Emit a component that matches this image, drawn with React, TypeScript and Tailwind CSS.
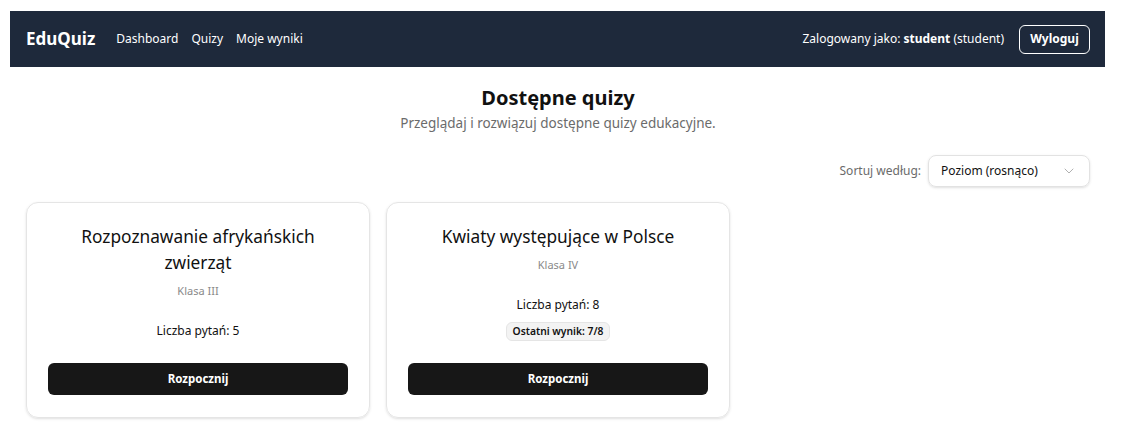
import { ChevronDown } from 'lucide-react'

const quizzes = [
  { title: 'Rozpoznawanie afrykańskich zwierząt', level: 'Klasa III', questions: 5, lastResult: null },
  { title: 'Kwiaty występujące w Polsce', level: 'Klasa IV', questions: 8, lastResult: '7/8' },
]

export default function App() {
  return (
    <div className="min-h-screen bg-white pt-[11px] pl-[10px] text-[#111]" style={{ fontFamily: '"Noto Sans", sans-serif' }}>
      <div className="w-[1095px]">
        {/* Navbar */}
        <header className="h-[56px] bg-[#1e293b] flex items-center pl-4 pr-[15px] text-white">
          <span className="text-[17px] font-bold mr-[21px]">EduQuiz</span>
          <nav className="flex items-center gap-[13px] text-[12px]">
            <span>Dashboard</span>
            <span>Quizy</span>
            <span>Moje wyniki</span>
          </nav>
          <div className="flex-1" />
          <div className="flex items-center gap-[15px] text-[12px]">
            <span>
              Zalogowany jako: <b className="font-bold">student</b> (student)
            </span>
            <button className="h-[29px] w-[71px] border border-white rounded-[6px] font-bold">Wyloguj</button>
          </div>
        </header>

        {/* Page content */}
        <main className="pl-4 pr-[15px]">
          <div className="text-center mt-[16px]">
            <h1 className="text-[20px] font-bold leading-[30px]">Dostępne quizy</h1>
            <p className="text-[13.5px] text-[#6b6b6b] leading-[20px]">
              Przeglądaj i rozwiązuj dostępne quizy edukacyjne.
            </p>
          </div>

          <div className="flex justify-end items-center gap-[7px] mt-[22px]">
            <span className="text-[12px] text-[#6b6b6b]">Sortuj według:</span>
            <div className="w-[162px] h-[32px] border border-[#e2e2e2] rounded-[8px] flex items-center justify-between pl-[12px] pr-[12px] text-[12px] shadow-sm">
              <span>Poziom (rosnąco)</span>
              <ChevronDown className="w-4 h-4 text-[#b0b0b0]" strokeWidth={1.5} />
            </div>
          </div>

          <div className="grid grid-cols-3 gap-4 mt-[15px]">
            {quizzes.map((q) => (
              <div
                key={q.title}
                className="border border-[#e5e5e5] rounded-[12px] shadow-sm px-[21px] pt-[21px] pb-[22px] flex flex-col text-center"
              >
                <div className="flex-1 flex flex-col items-center pb-[22px]">
                  <h2 className="text-[17.3px] leading-[26px] px-[4px]">{q.title}</h2>
                  <p className="text-[11px] text-[#8a8a8a] mt-[7px] leading-[16px]">{q.level}</p>
                  <p className="text-[12px] mt-[24px] leading-[16px]">Liczba pytań: {q.questions}</p>
                  {q.lastResult && (
                    <span className="mt-[9px] h-[19px] w-[104px] flex items-center justify-center text-[10.3px] font-semibold bg-[#f3f3f3] border border-[#e5e5e5] rounded-[6px]">
                      Ostatni wynik: {q.lastResult}
                    </span>
                  )}
                </div>
                <button className="w-full h-[32px] bg-[#171717] text-white text-[11.5px] font-bold rounded-[6px]">
                  Rozpocznij
                </button>
              </div>
            ))}
          </div>
        </main>
      </div>
    </div>
  )
}
